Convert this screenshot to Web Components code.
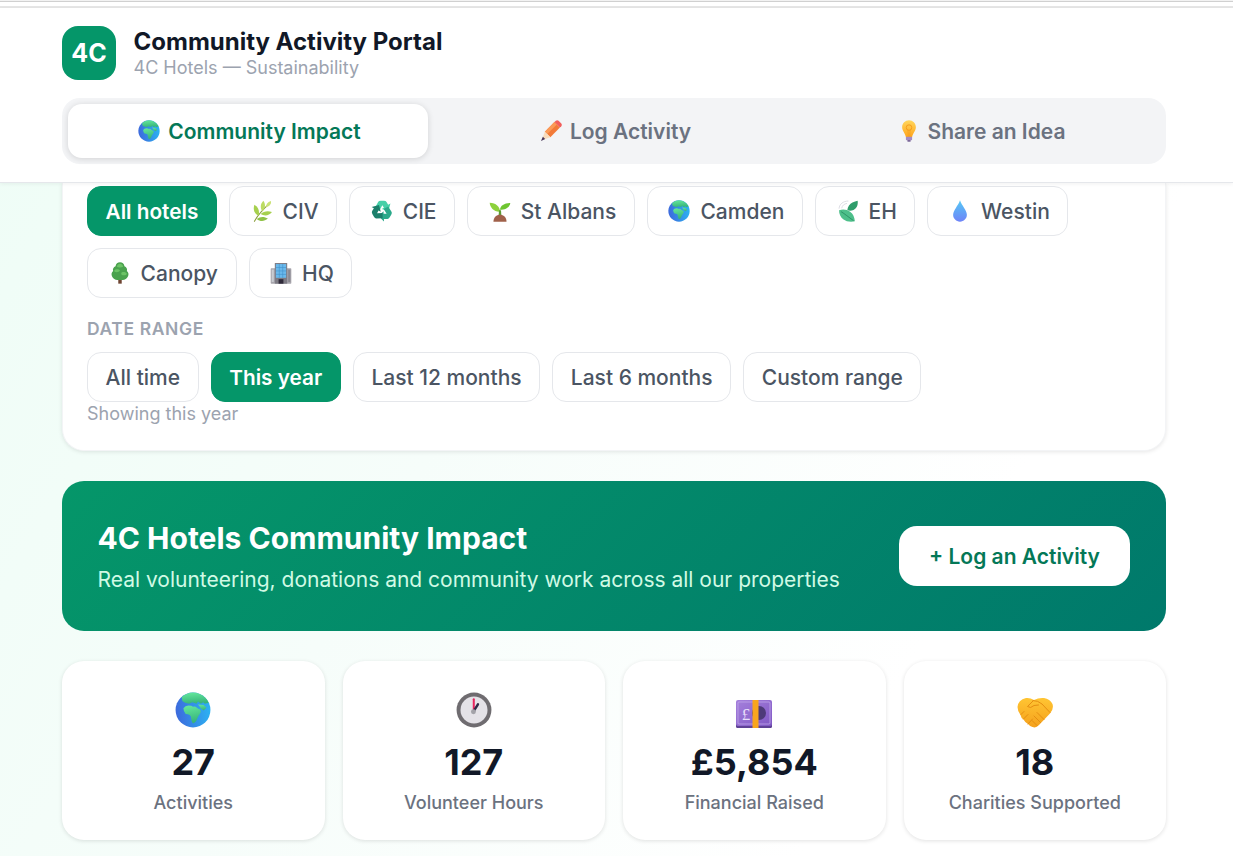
<!DOCTYPE html>
<html>
<head>
<meta charset="utf-8">
<title>Community Activity Portal</title>
<style>
	html, body { margin: 0; height: 856px; overflow: hidden; }
	body {
		font-family: Inter, "Liberation Sans", sans-serif;
		background: linear-gradient(120deg, #eefdf6 0%, #f6fdfa 40%, #ffffff 75%);
	}
	.strip { height: 8px; background: linear-gradient(#f2f2f2 0 1px, #d0d0d0 1px 2px, #fff 2px 6px, #e6e6e6 6px 8px); }
	main { display: block; padding: 0 67px 0 62px; }
</style>
</head>
<body>
<div class="strip"></div>
<app-header></app-header>
<main>
	<filter-card></filter-card>
	<impact-banner></impact-banner>
	<stat-grid>
		<stat-card icon="globe" value="27" label="Activities"></stat-card>
		<stat-card icon="clock" value="127" label="Volunteer Hours"></stat-card>
		<stat-card icon="money" value="£5,854" label="Financial Raised"></stat-card>
		<stat-card icon="hands" value="18" label="Charities Supported"></stat-card>
	</stat-grid>
</main>

<script>
	// all the emoji are drawn here, there is no emoji font to lean on
	const recycleArrow = 'M10 4Q11 2 14 2H19Q22 2 23 4L25.500 8.500 29 6.500 26 18 15.500 15 19 13 16.500 9 12.500 16.500 5.500 12.500Z';

	const icons = {
		globe: `
			<defs>
				<linearGradient id="sea" x1="0" y1="0.7" x2="1" y2="0.6"><stop offset="0" stop-color="#3d68dc"/><stop offset="1" stop-color="#2cb2f2"/></linearGradient>
				<linearGradient id="land" x1="0" y1="0" x2="0.2" y2="1"><stop offset="0" stop-color="#66ea9e"/><stop offset="1" stop-color="#38b57a"/></linearGradient>
			</defs>
			<circle cx="16" cy="16" r="15.500" fill="url(#sea)"/>
			<path fill="url(#land)" d="M6 4.500Q10.500.500 16 .500T27 5Q29 7 30 9.500L26.500 10.500 25 9 23 10.500 20.500 8.500 19 10.500 15.500 9 12.500 10.500 9 9.500 6.500 8Z"/>
			<path fill="url(#land)" d="M7.500 14.500Q9 12 12 12T16 13Q18 12.500 19.500 14T22.500 15.500Q23.500 17.500 22 19.500T20 23Q19 26.500 17 27.500T14.500 24Q14.500 21.500 13 20.500T9.500 19.500Q7.500 17.500 7.500 14.500Z"/>
			<path fill="url(#land)" d="M20.500 11 25.500 11.500 28 14 25.500 16.500 23 14.500Z"/>`,
		clock: `
			<circle cx="16" cy="16" r="15.500" fill="#6f6c70"/>
			<circle cx="16" cy="16" r="12" fill="#e4e2e7"/>
			<path d="M15.800 16.500 15.800 6.500" stroke="#e8245f" stroke-width="1.800" stroke-linecap="round"/>
			<path d="M16 16.500 19.500 11" stroke="#2f2a48" stroke-width="2.200" stroke-linecap="round"/>
			<circle cx="15.500" cy="17.500" r="2.200" fill="#a3a2a8"/>`,
		money: `
			<defs><linearGradient id="note" x1="0" y1="0" x2="1" y2="1"><stop offset="0" stop-color="#a580dc"/><stop offset="1" stop-color="#8058c4"/></linearGradient></defs>
			<path fill="#5f4296" d="M0 30H36V34.500A1.500 1.500 0 0 1 34.500 36H1.500A1.500 1.500 0 0 1 0 34.500Z"/>
			<rect x="0" y="8" width="36" height="26" rx="2" fill="url(#note)"/>
			<rect x="2" y="10" width="32" height="22" rx="1" fill="none" stroke="#bfa6ea" stroke-width=".8"/>
			<circle cx="23" cy="21" r="7" fill="#4d3a78"/>
			<text x="10" y="27.500" font-family="Liberation Serif, serif" font-size="17" fill="#e8defa" text-anchor="middle">£</text>
			<rect x="16.500" y="8" width="6" height="28" fill="#f9a51e"/>`,
		hands: `
			<defs><linearGradient id="skin" x1="0" y1="0" x2="0" y2="1"><stop offset="0" stop-color="#ffc533"/><stop offset="1" stop-color="#f5a11c"/></linearGradient></defs>
			<path fill="url(#skin)" d="M9 6Q13 5.500 17 8 21.500 5.500 27 6 33 7 35.500 12 37 17 33 21.500L22 33Q19 36.500 15.500 35 13 34.500 11 32 8 30.500 6.500 27.500 4 26 3.500 23 .5 19 .5 15 1 8 9 6Z"/>
			<path fill="none" stroke="#e58e12" stroke-width="1" stroke-linecap="round" d="M16 8.500Q21 8.500 25 12L33 20.500M16 9 10.500 14.500Q13.500 17 17 13.500L21.500 13M4 22.500 7 19.500M6.500 27 11 22.500M11 32 15.500 27M27 27.500 20 20.500M23.500 30.500 17 24M20 33.500 15 28.500"/>`,
		seedling: `
			<path d="M16 17C16 10 10 4 1 4 1.500 11 7 17.500 16 17Z" fill="#8dd13c"/>
			<path d="M16 14C16.500 8.500 22 4.500 31 4.500 30 10.500 24.500 15 16 14Z" fill="#6ec531"/>
			<path d="M14.500 15H17.500L18 24H14Z" fill="#5d9c33"/>
			<path d="M6.500 31.500C6.500 25 11 21.500 16 21.500S25.500 25 25.500 31.500Z" fill="#a0614a"/>`,
		herb: `
			<path d="M5 31C10 22 17 14 27 5" fill="none" stroke="#8a9d3c" stroke-width="1.600" stroke-linecap="round"/>
			<path d="M11 23C5 20 2.500 14 5 7 10.500 10.500 13 16 11 23Z" fill="#a6d04e"/>
			<path d="M16.500 16.500C13 11.500 13.500 5.500 18 1 21.500 6 21 12 16.500 16.500Z" fill="#bcdc62"/>
			<path d="M22 10.500C21.500 6.500 24 3 29 1.500 30 5.500 27 9.500 22 10.500Z" fill="#cbe276"/>
			<path d="M8.500 27.500C13 24 19 23.500 24.500 27 19.500 31.500 13 31.500 8.500 27.500Z" fill="#8fc247"/>
			<path d="M14 20.500C18.500 16.500 24 15.500 30.500 17.500 26.500 23 19.500 24 14 20.500Z" fill="#a6d04e"/>`,
		recycle: `
			<path fill="#45d0a8" d="${recycleArrow}"/>
			<path fill="#2aa98a" transform="rotate(120 16 17.500)" d="${recycleArrow}"/>
			<path fill="#1b7f6b" transform="rotate(240 16 17.500)" d="${recycleArrow}"/>`,
		leaves: `
			<path d="M3 12C3.500 6 9 1.500 16 1.500M7 11.500C7.500 8 10.500 5.500 14 5" fill="none" stroke="#d6d6de" stroke-width="1.200" stroke-linecap="round"/>
			<path d="M30 1C31 7.500 28.500 12 24 14.500 21 16 18 16 15 15 15.500 9.500 18.500 5.500 22.500 3.500 25 2.200 27.500 1.500 30 1Z" fill="#2f9d6b"/>
			<path d="M3 15C9 13 14.500 14 19 17 23.500 20 25.500 25 26 31 20 32.500 13.500 31.500 9 28 5 25 3 20.500 3 15Z" fill="#4dbf8a"/>
			<path d="M6 17C11 20 17 25 24 30" fill="none" stroke="#1f7f57" stroke-width="1"/>`,
		drop: `
			<defs><linearGradient id="water" x1="0" y1="0" x2="0" y2="1"><stop offset="0" stop-color="#55c8f5"/><stop offset="1" stop-color="#6f84f8"/></linearGradient></defs>
			<path fill="url(#water)" d="M16 .500C17 4.500 20 8 22 11.500 23.800 14.500 26 18 26 21.500 26 27 21.500 31.500 16 31.500S6 27 6 21.500C6 18 8.200 14.500 10 11.500 12 8 15 4.500 16 .500Z"/>`,
		tree: `
			<rect x="13.500" y="24" width="5" height="7.500" fill="#6e4532"/>
			<path fill="#4aa24e" d="M16 .500C19.500.500 22 3 22.500 6 25.500 7 27 10 26 13 28.500 15 29 18.500 27.500 21 26 24 23 26 20 26H12C9 26 6 24 4.500 21 3 18.500 3.500 15 6 13 5 10 6.500 7 9.500 6 10 3 12.500.500 16 .500Z"/>
			<path fill="#6cc366" d="M16 2.500C18.500 2.500 20.500 4.500 20.500 7 18 8.500 13.500 8.500 11.500 7 11.500 4.500 13.500 2.500 16 2.500ZM9.500 11C12 10 15 11 16 12.500 14.500 15 10 15.500 7.500 13.500 7.500 12.500 8.500 11.500 9.500 11ZM19 15C21.500 14 25 15 26 17 25 19.500 20.500 20 18 18 17.500 16.500 18 15.500 19 15Z"/>`,
		office: `
			<rect x="1" y="9" width="30" height="22.500" rx="1" fill="#a8a6ad"/>
			<rect x="7" y="1.500" width="18" height="30" fill="#7d7b84"/>
			<rect x="8.500" y="3" width="15" height="20" fill="#6ab9ec"/>
			<path d="M13.500 3V23M18.500 3V23M8.500 8H23.500M8.500 13H23.500M8.500 18H23.500" stroke="#3f8fc8" stroke-width=".8"/>
			<rect x="2.500" y="11" width="3" height="18" fill="#c9ccd2"/>
			<rect x="26.500" y="11" width="3" height="18" fill="#8a8891"/>
			<rect x="12.500" y="25" width="7" height="6.500" fill="#2f2a3a"/>`,
		pencil: `
			<path fill="#f27a38" d="M7 17 21 3 29 11 15 25Z"/>
			<path fill="#fb9a57" d="M7 17 21 3 24.500 6.500 10.500 20.500Z"/>
			<path fill="#f25f5c" d="M21 3 23 1Q25 -.5 27 1L31 5Q32.500 7 31 9L29 11Z"/>
			<path fill="#f8dcbc" d="M7 17 15 25 2.500 29.500Z"/>
			<path fill="#443558" d="M4.200 24.500 7.500 27.800 1.500 30.500Z"/>`,
		bulb: `
			<defs><linearGradient id="glass" x1="0" y1="0" x2="0" y2="1"><stop offset="0" stop-color="#ffd65c"/><stop offset="1" stop-color="#ffa51c"/></linearGradient></defs>
			<path fill="url(#glass)" d="M16 .500C21.500.500 26 5 26 10.500 26 16 21.500 19 20.500 25H11.500C10.500 19 6 16 6 10.500 6 5 10.500.500 16 .500Z"/>
			<circle cx="16" cy="11" r="4" fill="none" stroke="#f29a1c" stroke-width="1.400"/>
			<path d="M14.500 14.500 15 25M17.500 14.500 17 25" stroke="#f29a1c" stroke-width="1"/>
			<rect x="11.500" y="24.500" width="9" height="5" rx="1" fill="#a48bc2"/>
			<rect x="13.500" y="29" width="5" height="2.500" rx="1" fill="#7b6799"/>`
	};

	const iconViewBox = { money: '0 0 36 36', hands: '0 0 36 36', recycle: '-1 1 34 34' };

	window.customElements.define(
		'emoji-icon',
		class EmojiIcon extends HTMLElement {
			connectedCallback() {
				const name = this.getAttribute('name');
				const shadowRoot = this.attachShadow({ mode: 'open' });
				shadowRoot.innerHTML = /* html */ `
					<style>
						:host { display: inline-flex; width: var(--icon-size, 22px); height: var(--icon-size, 22px); flex: none; }
						svg { width: 100%; height: 100%; display: block; }
					</style>
					<svg viewBox="${iconViewBox[name] || '0 0 32 32'}" aria-hidden="true">${icons[name]}</svg>
				`;
			}
		}
	);

	window.customElements.define(
		'app-header',
		class AppHeader extends HTMLElement {
			constructor() {
				super();
				this.attachShadow({ mode: 'open' }).innerHTML = /* html */ `
					<style>
						:host {
							display: block;
							position: relative;
							z-index: 2;
							background: #fff;
							height: 175px;
							box-sizing: border-box;
							padding: 18px 67px 0 62px;
							border-bottom: 1px solid #e5e7eb;
							box-shadow: 0 1px 4px rgba(0, 0, 0, .06);
						}
						.brand { display: flex; align-items: center; gap: 17.5px; height: 54px; }
						.logo {
							width: 54px;
							height: 54px;
							border-radius: 16px;
							background: #059669;
							color: #fff;
							font-size: 25px;
							font-weight: 700;
							display: flex;
							align-items: center;
							justify-content: center;
						}
						h1 { margin: 0 0 1px; font-size: 24px; line-height: 27px; font-weight: 700; color: #111827; }
						p { margin: 0; font-size: 18px; line-height: 23px; color: #9ca3af; }
						nav {
							display: grid;
							grid-template-columns: repeat(3, 1fr);
							gap: 6px;
							margin-top: 18px;
							padding: 6px;
							height: 66px;
							box-sizing: border-box;
							border-radius: 18px;
							background: #f3f4f6;
						}
						.tab {
							display: flex;
							align-items: center;
							justify-content: center;
							gap: 8px;
							padding-left: 3px;
							border-radius: 14px;
							font-size: 21px;
							font-weight: 600;
							color: #6b7280;
						}
						.tab.active { background: #fff; color: #047857; box-shadow: 0 1px 6px rgba(0, 0, 0, .14); }
					</style>
					<div class="brand">
						<div class="logo">4C</div>
						<div>
							<h1>Community Activity Portal</h1>
							<p>4C Hotels — Sustainability</p>
						</div>
					</div>
					<nav>
						<div class="tab active"><emoji-icon name="globe"></emoji-icon>Community Impact</div>
						<div class="tab"><emoji-icon name="pencil"></emoji-icon>Log Activity</div>
						<div class="tab"><emoji-icon name="bulb"></emoji-icon>Share an Idea</div>
					</nav>
				`;
			}
		}
	);

	window.customElements.define(
		'filter-chip',
		class FilterChip extends HTMLElement {
			constructor() {
				super();
				const icon = this.getAttribute('icon');
				this.attachShadow({ mode: 'open' }).innerHTML = /* html */ `
					<style>
						:host {
							display: inline-flex;
							align-items: center;
							gap: 7px;
							height: 50px;
							box-sizing: border-box;
							padding: 0 17.6px;
							border: 1px solid #e5e7eb;
							border-radius: 14px;
							background: #fff;
							color: #4b5563;
							font-size: 21px;
							font-weight: 500;
						}
						:host([active]) { background: #059669; border-color: #059669; color: #fff; font-weight: 600; font-size: 20.75px; }
						emoji-icon { margin: 0 3px; }
					</style>
					${icon ? `<emoji-icon name="${icon}"></emoji-icon>` : ''}
					<slot></slot>
				`;
			}
		}
	);

	window.customElements.define(
		'filter-card',
		class FilterCard extends HTMLElement {
			constructor() {
				super();
				this.attachShadow({ mode: 'open' }).innerHTML = /* html */ `
					<style>
						:host {
							display: block;
							background: #fff;
							border: 1px solid #f3f4f6;
							border-top: 0;
							border-radius: 0 0 22px 22px;
							padding: 3px 24px 24px;
							box-shadow: 0 1px 4px rgba(0, 0, 0, .1);
						}
						.chips { display: flex; flex-wrap: wrap; gap: 12px; }
						h2 {
							margin: 20px 0 13px;
							font-size: 17.5px;
							line-height: 21px;
							font-weight: 600;
							letter-spacing: .6px;
							color: #9ca3af;
						}
						p { margin: 0; font-size: 18px; line-height: 24px; color: #9ca3af; }
					</style>
					<div class="chips">
						<filter-chip active>All hotels</filter-chip>
						<filter-chip icon="herb">CIV</filter-chip>
						<filter-chip icon="recycle">CIE</filter-chip>
						<filter-chip icon="seedling">St Albans</filter-chip>
						<filter-chip icon="globe">Camden</filter-chip>
						<filter-chip icon="leaves">EH</filter-chip>
						<filter-chip icon="drop">Westin</filter-chip>
						<filter-chip icon="tree">Canopy</filter-chip>
						<filter-chip icon="office">HQ</filter-chip>
					</div>
					<h2>DATE RANGE</h2>
					<div class="chips">
						<filter-chip>All time</filter-chip>
						<filter-chip active>This year</filter-chip>
						<filter-chip>Last 12 months</filter-chip>
						<filter-chip>Last 6 months</filter-chip>
						<filter-chip>Custom range</filter-chip>
					</div>
					<p>Showing this year</p>
				`;
			}
		}
	);

	window.customElements.define(
		'impact-banner',
		class ImpactBanner extends HTMLElement {
			constructor() {
				super();
				this.attachShadow({ mode: 'open' }).innerHTML = /* html */ `
					<style>
						:host {
							display: flex;
							align-items: center;
							justify-content: space-between;
							height: 150px;
							box-sizing: border-box;
							margin-top: 30px;
							padding: 0 36px 0 35.5px;
							border-radius: 22px;
							background: linear-gradient(135deg, #059669, #00796b);
							color: #fff;
						}
						h2 { margin: 0 0 10px; font-size: 30px; line-height: 38px; font-weight: 700; }
						p { margin: 0; font-size: 21px; line-height: 26px; color: #d1fae5; }
						.cta {
							display: flex;
							align-items: center;
							justify-content: center;
							width: 231px;
							height: 60px;
							border-radius: 18px;
							background: #fff;
							color: #047857;
							font-size: 21px;
							font-weight: 600;
						}
					</style>
					<div>
						<h2>4C Hotels Community Impact</h2>
						<p>Real volunteering, donations and community work across all our properties</p>
					</div>
					<div class="cta">+ Log an Activity</div>
				`;
			}
		}
	);

	window.customElements.define(
		'stat-grid',
		class StatGrid extends HTMLElement {
			constructor() {
				super();
				this.attachShadow({ mode: 'open' }).innerHTML = /* html */ `
					<style>
						:host { display: grid; grid-template-columns: repeat(4, 1fr); gap: 18px; margin-top: 30px; }
					</style>
					<slot></slot>
				`;
			}
		}
	);

	window.customElements.define(
		'stat-card',
		class StatCard extends HTMLElement {
			constructor() {
				super();
				this.attachShadow({ mode: 'open' }).innerHTML = /* html */ `
					<style>
						:host {
							display: flex;
							flex-direction: column;
							align-items: center;
							height: 179px;
							box-sizing: border-box;
							padding-top: 31px;
							border-radius: 22px;
							background: #fff;
							box-shadow: 0 1px 4px rgba(0, 0, 0, .12);
							--icon-size: 36px;
						}
						.value { margin-top: 11px; font-size: 36px; line-height: 46px; font-weight: 700; color: #111827; }
						.label { margin-top: 6px; font-size: 18px; line-height: 24px; font-weight: 500; color: #6b7280; }
					</style>
					<emoji-icon name="${this.getAttribute('icon')}"></emoji-icon>
					<div class="value">${this.getAttribute('value')}</div>
					<div class="label">${this.getAttribute('label')}</div>
				`;
			}
		}
	);
</script>
</body>
</html>
